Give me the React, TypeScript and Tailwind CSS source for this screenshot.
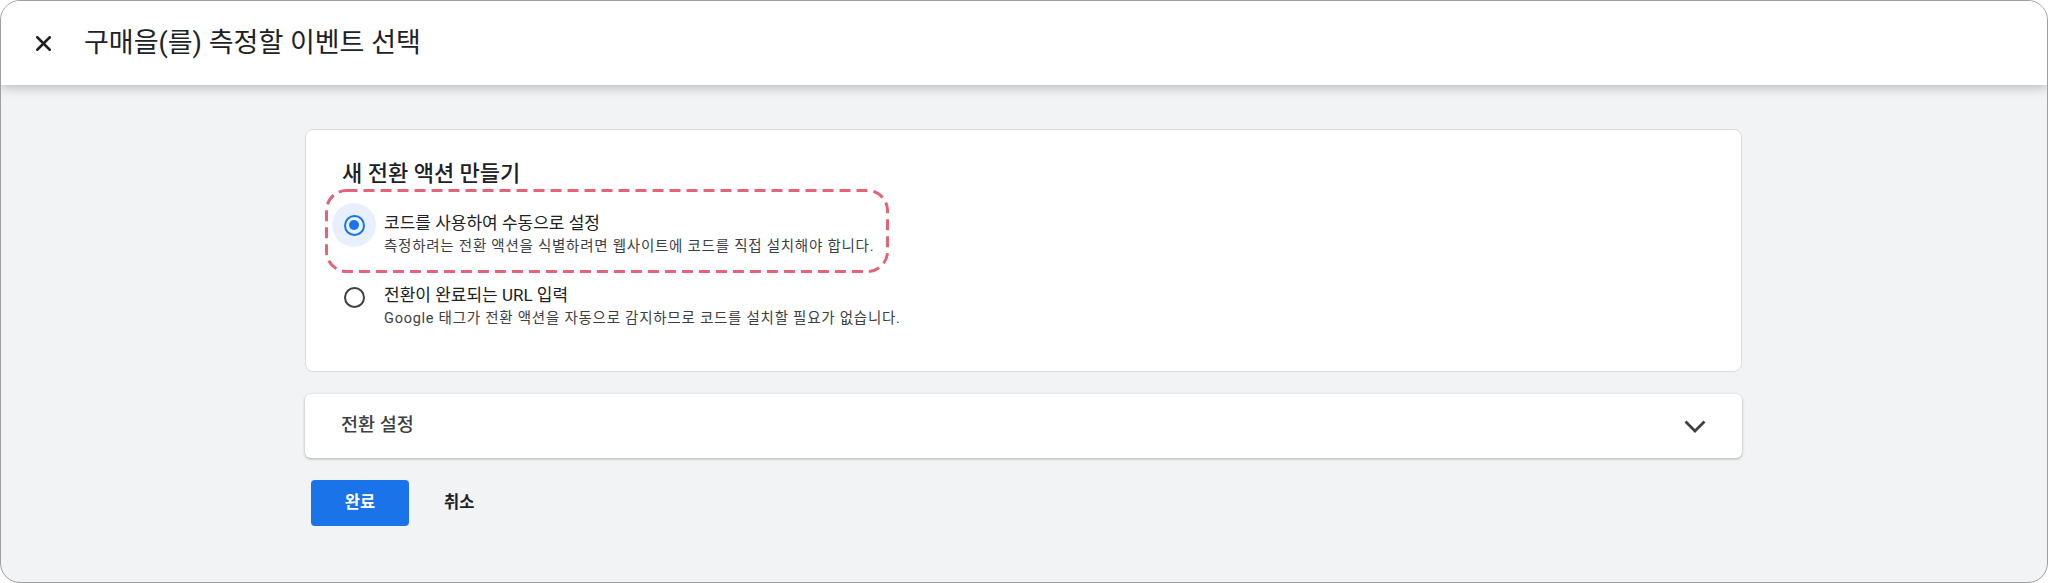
import { X } from "lucide-react";

const font = "font-['Roboto','Noto_Sans_CJK_KR',sans-serif]";

function Radio({ checked }: { checked?: boolean }) {
  return (
    <div
      className={`w-[44px] h-[44px] -ml-[10px] shrink-0 rounded-full flex items-center justify-center ${
        checked ? "bg-[#e8f0fe]" : ""
      }`}
    >
      <div
        className={`w-[21px] h-[21px] rounded-full border-[2.5px] flex items-center justify-center ${
          checked ? "border-[#1a73e8]" : "border-[#3c4043]"
        }`}
      >
        {checked && <div className="w-[10px] h-[10px] rounded-full bg-[#1a73e8]" />}
      </div>
    </div>
  );
}

function Option({
  title,
  desc,
  checked,
}: {
  title: string;
  desc: string;
  checked?: boolean;
}) {
  return (
    <div className="flex items-start gap-[8px]">
      <Radio checked={checked} />
      <div className="mt-[9px] flex flex-col">
        <span className="text-[17px] leading-[22px] text-[#202124]">{title}</span>
        <span className="text-[14.5px] leading-[18px] mt-[4px] tracking-[0.75px] text-[#3c4043]">
          {desc}
        </span>
      </div>
    </div>
  );
}

export default function App() {
  return (
    <div className={`w-[2048px] h-[583px] bg-white ${font}`}>
      <div className="h-full rounded-[20px] border border-[#9e9e9e] bg-[#f1f3f4] overflow-hidden flex flex-col">
        {/* Header */}
        <header className="relative z-10 h-[84px] shrink-0 bg-white flex items-center pl-[30px] shadow-[0_3px_10px_rgba(0,0,0,0.22)]">
          <X size={25} strokeWidth={2.4} className="text-[#202124]" />
          <h1 className="ml-[28px] text-[27px] text-[#202124]">구매을(를) 측정할 이벤트 선택</h1>
        </header>

        {/* Content */}
        <main className="pl-[304px] pr-[305px] pt-[44px] flex flex-col">
          {/* New conversion action */}
          <section className="bg-white rounded-[8px] border border-[#dadce0] pl-[36px] pt-[29px] pb-[43px]">
            <h2 className="text-[22px] leading-[30px] font-medium text-[#202124]">새 전환 액션 만들기</h2>
            <div className="mt-[14px] flex flex-col gap-[19px]">
              <div className="relative">
                <svg
                  className="absolute left-[-17px] top-[-14px] pointer-events-none"
                  width="564"
                  height="84"
                >
                  <rect
                    x="1.5"
                    y="1.5"
                    width="561"
                    height="81"
                    rx="20"
                    fill="none"
                    stroke="#e36478"
                    strokeWidth="3"
                    strokeDasharray="11 6"
                  />
                </svg>
                <Option
                  checked
                  title="코드를 사용하여 수동으로 설정"
                  desc="측정하려는 전환 액션을 식별하려면 웹사이트에 코드를 직접 설치해야 합니다."
                />
              </div>
              <Option
                title="전환이 완료되는 URL 입력"
                desc="Google 태그가 전환 액션을 자동으로 감지하므로 코드를 설치할 필요가 없습니다."
              />
            </div>
          </section>

          {/* Conversion settings */}
          <section className="mt-[22px] h-[64px] bg-white rounded-[6px] shadow-[0_1px_3px_rgba(0,0,0,0.3)] flex items-center justify-between pl-[36px] pr-[36px]">
            <span className="text-[18.5px] font-medium text-[#3c4043]">전환 설정</span>
            <svg width="22" height="13" viewBox="0 0 22 13">
              <polyline
                points="1.5,1.5 11,11 20.5,1.5"
                fill="none"
                stroke="#3c4043"
                strokeWidth="2.8"
              />
            </svg>
          </section>

          {/* Actions */}
          <div className="mt-[22px] ml-[6px] flex items-center">
            <button className="w-[98px] h-[46px] rounded-[4px] bg-[#1a73e8] text-white text-[16.5px] font-bold">
              완료
            </button>
            <button className="ml-[35px] text-[16.5px] font-bold text-[#202124]">취소</button>
          </div>
        </main>
      </div>
    </div>
  );
}
